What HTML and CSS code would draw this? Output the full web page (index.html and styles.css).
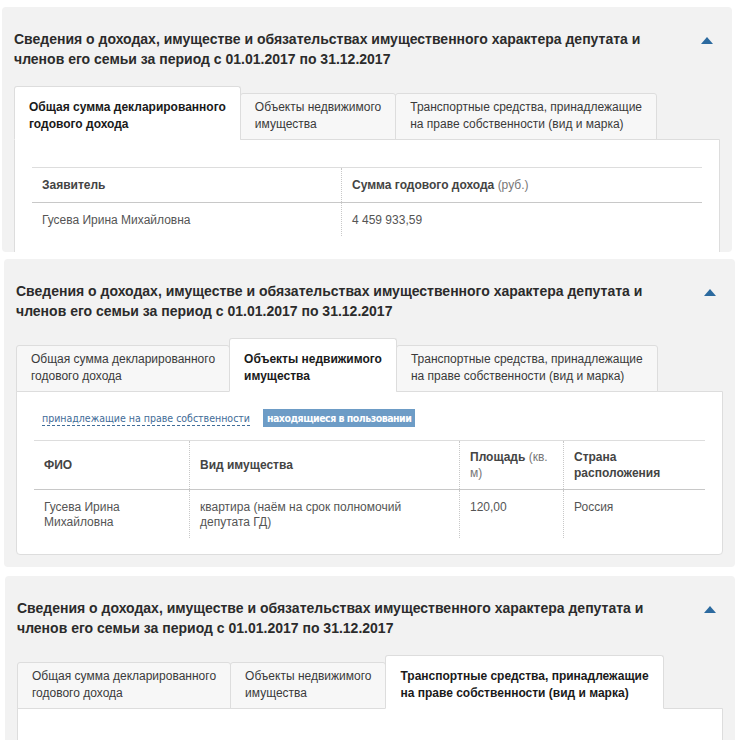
FILE: index.html
```html
<!DOCTYPE html>
<html lang="ru">
<head>
    <meta charset="UTF-8">
    <title>Сведения о доходах</title>
    <link rel="stylesheet" href="styles.css">
</head>
<body>

<!-- доходы -->
<div class="panel panel-income">
    <div class="panel-head">
        <h2 class="panel-title">Сведения о доходах, имуществе и обязательствах имущественного характера депутата и<br>членов его семьи за период с 01.01.2017 по 31.12.2017</h2>
        <span class="toggle"></span>
    </div>
    <div class="tabs">
        <div class="tab active">Общая сумма декларированного<br>годового дохода</div>
        <div class="tab">Объекты недвижимого<br>имущества</div>
        <div class="tab">Транспортные средства, принадлежащие<br>на праве собственности (вид и марка)</div>
    </div>
    <div class="tab-body tab-body-income">
        <table class="data">
            <tr>
                <th class="col-applicant">Заявитель</th>
                <th>Сумма годового дохода <span class="unit">(руб.)</span></th>
            </tr>
            <tr>
                <td>Гусева Ирина Михайловна</td>
                <td>4 459 933,59</td>
            </tr>
        </table>
    </div>
</div>

<!-- недвижимость -->
<div class="panel panel-realty">
    <div class="panel-head">
        <h2 class="panel-title">Сведения о доходах, имуществе и обязательствах имущественного характера депутата и<br>членов его семьи за период с 01.01.2017 по 31.12.2017</h2>
        <span class="toggle"></span>
    </div>
    <div class="tabs">
        <div class="tab">Общая сумма декларированного<br>годового дохода</div>
        <div class="tab active">Объекты недвижимого<br>имущества</div>
        <div class="tab">Транспортные средства, принадлежащие<br>на праве собственности (вид и марка)</div>
    </div>
    <div class="tab-body">
        <div class="filters">
            <a class="filter-link">принадлежащие на праве собственности</a>
            <span class="filter-badge">находящиеся в пользовании</span>
        </div>
        <table class="data data-fixed">
            <tr>
                <th class="col-fio">ФИО</th>
                <th class="col-kind">Вид имущества</th>
                <th class="col-area">Площадь <span class="unit">(кв.</span><br><span class="unit">м)</span></th>
                <th>Страна расположения</th>
            </tr>
            <tr>
                <td>Гусева Ирина Михайловна</td>
                <td>квартира (наём на срок полномочий депутата ГД)</td>
                <td>120,00</td>
                <td>Россия</td>
            </tr>
        </table>
    </div>
</div>

<!-- транспорт -->
<div class="panel panel-transport">
    <div class="panel-head">
        <h2 class="panel-title">Сведения о доходах, имуществе и обязательствах имущественного характера депутата и<br>членов его семьи за период с 01.01.2017 по 31.12.2017</h2>
        <span class="toggle"></span>
    </div>
    <div class="tabs">
        <div class="tab">Общая сумма декларированного<br>годового дохода</div>
        <div class="tab">Объекты недвижимого<br>имущества</div>
        <div class="tab active">Транспортные средства, принадлежащие<br>на праве собственности (вид и марка)</div>
    </div>
    <div class="tab-body tab-body-empty"></div>
</div>

</body>
</html>
```

FILE: styles.css
```css
body {
    margin: 0;
    font-family: "Liberation Sans", Arial, sans-serif;
    background-color: #fff;
    color: #333;
}
.panel {
    box-sizing: border-box;
    width: 730px;
    background-color: #f2f2f2;
    border-radius: 4px;
    padding: 22px 12px 0;
}
.panel-income {
    margin: 7px 0 0 2px;
    height: 245px;
    overflow: hidden;
}
.panel-realty {
    margin: 7px 0 0 4px;
    width: 731px;
    padding-bottom: 12px;
}
.panel-transport {
    margin: 9px 0 0 5px;
    height: 170px;
    overflow: hidden;
}
.panel-head {
    display: flex;
    justify-content: space-between;
    align-items: flex-start;
    margin-bottom: 17px;
}
.panel-title {
    margin: 0;
    font-size: 14px;
    line-height: 20px;
    font-weight: bold;
    color: #2b2b2b;
}
.toggle {
    width: 0;
    height: 0;
    margin: 8px 7px 0 0;
    border-left: 6px solid transparent;
    border-right: 6px solid transparent;
    border-bottom: 7px solid #2c6a9f;
}
.tabs {
    display: flex;
    align-items: flex-end;
    position: relative;
    z-index: 1;
    margin-bottom: -1px;
}
.tab {
    font-size: 12px;
    line-height: 17px;
    color: #3a3a3a;
    background-color: #f7f7f7;
    border: 1px solid #ddd;
    border-radius: 3px 3px 0 0;
    padding: 5px 14px 6px;
    margin-left: -1px;
    white-space: nowrap;
}
.tab:first-child {
    margin-left: 0;
}
.tab.active {
    background-color: #fff;
    border-bottom-color: #fff;
    font-weight: bold;
    color: #1a1a1a;
    padding-top: 12px;
}
.tab-body {
    background-color: #fff;
    border: 1px solid #ddd;
    border-radius: 0 0 4px 4px;
    padding: 17px 17px 16px;
}
.tab-body-income {
    padding-top: 27px;
    min-height: 150px;
}
.tab-body-empty {
    height: 60px;
}
.filters {
    display: flex;
    align-items: center;
    gap: 13px;
    padding-left: 8px;
    margin-bottom: 13px;
    font-family: "DejaVu Sans Condensed", "DejaVu Sans", sans-serif;
    font-size: 10.5px;
    line-height: 14px;
}
.filter-link {
    color: #3f6c98;
    border-bottom: 1px dashed #3f6c98;
}
.filter-badge {
    background-color: #6d9cc6;
    color: #fff;
    font-weight: bold;
    letter-spacing: -0.5px;
    padding: 2px 4px;
}
.data {
    width: 100%;
    border-collapse: collapse;
    font-size: 12px;
    line-height: 15px;
    color: #555;
}
.data-fixed {
    table-layout: fixed;
}
.data th {
    text-align: left;
    vertical-align: middle;
    font-weight: bold;
    color: #444;
    line-height: 16px;
    padding: 9px 10px;
    border-top: 1px solid #ddd;
    border-bottom: 1px solid #c8c8c8;
}
.data-fixed th {
    padding: 8px 10px;
}
.data td {
    vertical-align: top;
    padding: 10px 10px 8px;
}
.data th + th,
.data td + td {
    border-left: 1px dotted #c8c8c8;
}
.data .unit {
    font-weight: normal;
    color: #777;
}
.col-applicant {
    width: 289px;
}
.col-fio {
    width: 135px;
}
.col-kind {
    width: 249px;
}
.col-area {
    width: 83px;
}
```
